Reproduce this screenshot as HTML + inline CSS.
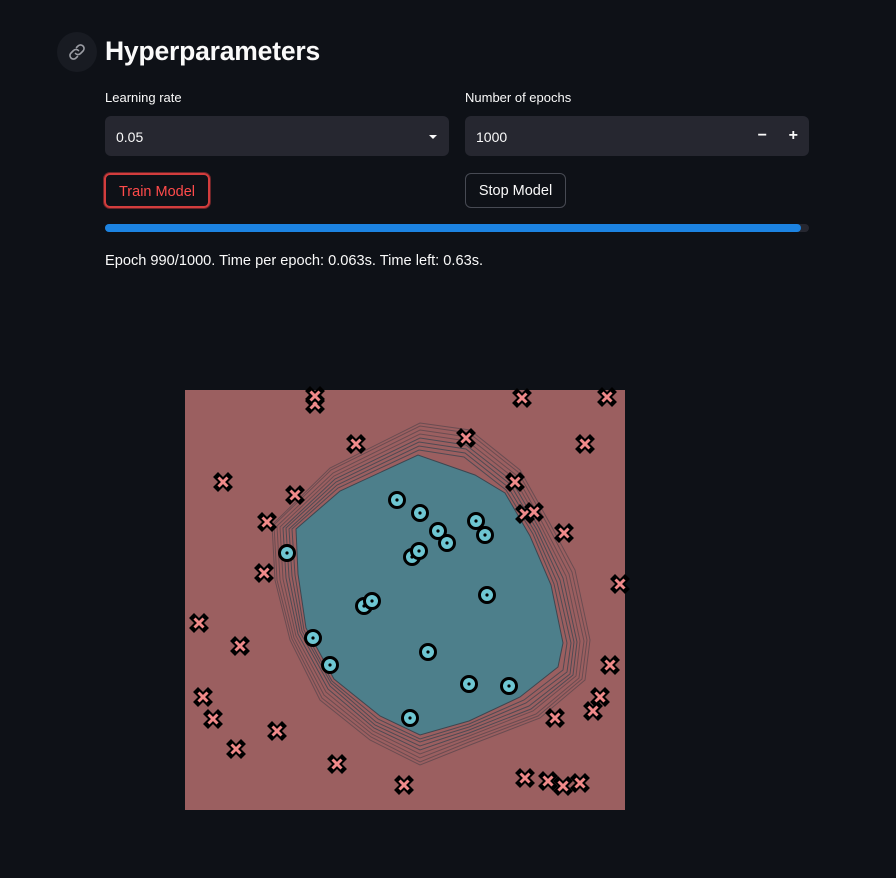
<!DOCTYPE html>
<html><head><meta charset="utf-8"><style>
*{box-sizing:border-box;margin:0;padding:0}
body{width:896px;height:878px;background:#0e1117;font-family:"Liberation Sans",sans-serif;color:#fafafa;position:relative;overflow:hidden}
.abs{position:absolute}
h1{position:absolute;left:105px;top:36px;font-size:26.5px;font-weight:700;letter-spacing:-0.2px}
.link{left:57px;top:32px;width:40px;height:40px;border-radius:50%;background:#181b22}
.lbl{font-size:13px;color:#fafafa}
.box{background:#262730;border-radius:6px;height:40px;font-size:14px;padding:13px 11px}
.btn{border-radius:6px;height:35px;font-size:14.5px;text-align:center;line-height:34px}
</style></head><body>
<div class="abs link"><svg width="40" height="40" viewBox="0 0 40 40"><g fill="none" stroke="#9a9ca3" stroke-width="1.6" stroke-linecap="round"><path d="M19.5 15.5l1.5-1.5a3.5 3.5 0 0 1 5 5l-2.5 2.5a3.5 3.5 0 0 1-5 0"/><path d="M20.5 24.5l-1.5 1.5a3.5 3.5 0 0 1-5-5l2.5-2.5a3.5 3.5 0 0 1 5 0"/></g></svg></div>
<h1>Hyperparameters</h1>
<div class="abs lbl" style="left:105px;top:90px">Learning rate</div>
<div class="abs lbl" style="left:465px;top:90px">Number of epochs</div>
<div class="abs box" style="left:105px;top:116px;width:344px">0.05<svg class="abs" style="right:11px;top:18px" width="10" height="6"><path d="M1 1h8l-4 4z" fill="#fafafa"/></svg></div>
<div class="abs box" style="left:465px;top:116px;width:344px">1000<span class="abs" style="right:42px;top:11px;font-weight:700;font-size:16px">−</span><span class="abs" style="right:11px;top:11px;font-weight:700;font-size:16px">+</span></div>
<div class="abs btn" style="left:104px;top:173px;width:106px;border:2px solid #d33d3d;box-shadow:0 0 0 1px #6b2428;color:#ff4b4b">Train Model</div>
<div class="abs btn" style="left:465px;top:173px;width:101px;border:1px solid #474a53;color:#fafafa">Stop Model</div>
<div class="abs" style="left:105px;top:224px;width:704px;height:8px;border-radius:4px;background:#262730"><div style="width:696px;height:8px;border-radius:4px;background:#1c83e1"></div></div>
<div class="abs" style="left:105px;top:253px;font-size:14.6px">Epoch 990/1000. Time per epoch: 0.063s. Time left: 0.63s.</div>
<svg class="abs" style="left:0;top:0" width="896" height="878">
<defs>
<g id="x"><path d="M-5-5L5 5M5-5L-5 5" stroke="#000" stroke-width="7" stroke-linecap="square"/><path d="M-4.5-4.5L4.5 4.5M4.5-4.5L-4.5 4.5" stroke="#f08a8a" stroke-width="3"/></g>
<g id="o"><circle r="7.5" fill="#6ec6d2" stroke="#000" stroke-width="3"/><circle r="1.6" fill="#000"/></g>
</defs>
<rect x="185" y="390" width="440" height="420" fill="#9b5f60"/>
<g fill="none" stroke="#4a4048" stroke-width="1" opacity="0.6">
<path d="M272 525 L330 468 L420 423 L470 430 L520 470 L548 520 L575 570 L590 640 L585 680 L540 718 L470 745 L420 765 L370 740 L320 700 L290 640 L275 580 Z"/>
<path d="M274 525 L331 470 L420 426 L469 433 L518 472 L546 522 L572 572 L587 640 L582 679 L538 716 L469 742 L420 762 L371 737 L322 698 L292 639 L277 580 Z"/>
<path d="M277 526 L333 473 L420 430 L468 437 L516 475 L543 524 L569 574 L584 641 L579 678 L536 714 L469 739 L420 758 L372 734 L324 695 L294 638 L280 580 Z"/>
<path d="M280 527 L334 476 L420 434 L467 441 L514 478 L541 526 L566 576 L580 641 L576 676 L533 711 L469 736 L420 754 L373 731 L326 692 L296 636 L283 579 Z"/>
</g>
<g fill="none" stroke="#3d4650" stroke-width="1" opacity="0.8">
<path d="M283 528 L335 479 L420 438 L466 445 L512 481 L539 528 L563 578 L577 642 L573 675 L531 709 L469 733 L420 750 L374 728 L328 689 L298 634 L286 578 Z"/>
<path d="M286 528 L336 482 L419 442 L466 449 L510 484 L537 530 L560 580 L574 642 L570 674 L529 706 L469 730 L420 746 L375 725 L330 686 L300 632 L289 577 Z"/>
<path d="M289 529 L337 485 L419 446 L465 453 L508 487 L535 532 L557 582 L571 643 L567 672 L526 703 L469 727 L420 742 L376 722 L331 683 L302 631 L292 576 Z"/>
<path d="M292 529 L338 488 L419 450 L464 457 L506 490 L533 534 L554 584 L567 643 L563 670 L524 700 L469 724 L420 739 L378 719 L332 681 L304 630 L295 575 Z"/>
</g>
<path d="M296 529 L340 491 L418 455 L475 475 L505 493 L530 536 L551 585 L563 643 L558 667 L520 697 L469 721 L420 735 L380 716 L334 679 L306 628 L298 574 Z" fill="#4d7f8b" stroke="#3d4650"/>
<g>
<use href="#o" x="397" y="500"/><use href="#o" x="420" y="513"/><use href="#o" x="438" y="531"/><use href="#o" x="447" y="543"/><use href="#o" x="476" y="521"/><use href="#o" x="485" y="535"/><use href="#o" x="412" y="557"/><use href="#o" x="419" y="551"/><use href="#o" x="364" y="606"/><use href="#o" x="372" y="601"/><use href="#o" x="487" y="595"/><use href="#o" x="287" y="553"/><use href="#o" x="313" y="638"/><use href="#o" x="330" y="665"/><use href="#o" x="428" y="652"/><use href="#o" x="469" y="684"/><use href="#o" x="509" y="686"/><use href="#o" x="410" y="718"/>
<use href="#x" x="315" y="404"/><use href="#x" x="315" y="396"/><use href="#x" x="522" y="398"/><use href="#x" x="607" y="397"/><use href="#x" x="356" y="444"/><use href="#x" x="466" y="438"/><use href="#x" x="585" y="444"/><use href="#x" x="223" y="482"/><use href="#x" x="295" y="495"/><use href="#x" x="515" y="482"/><use href="#x" x="525" y="514"/><use href="#x" x="534" y="512"/><use href="#x" x="564" y="533"/><use href="#x" x="267" y="522"/><use href="#x" x="264" y="573"/><use href="#x" x="620" y="584"/><use href="#x" x="199" y="623"/><use href="#x" x="240" y="646"/><use href="#x" x="610" y="665"/><use href="#x" x="600" y="697"/><use href="#x" x="593" y="711"/><use href="#x" x="555" y="718"/><use href="#x" x="203" y="697"/><use href="#x" x="213" y="719"/><use href="#x" x="277" y="731"/><use href="#x" x="236" y="749"/><use href="#x" x="337" y="764"/><use href="#x" x="404" y="785"/><use href="#x" x="525" y="778"/><use href="#x" x="548" y="781"/><use href="#x" x="563" y="786"/><use href="#x" x="580" y="783"/>
</g>
</svg>
</body></html>
